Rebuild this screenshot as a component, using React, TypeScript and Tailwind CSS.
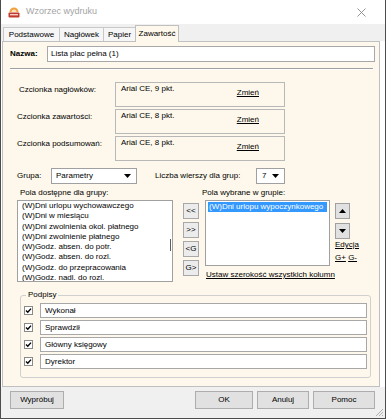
import React from "react";

function Arrow({ up }: { up?: boolean }) {
  return (
    <svg width="7" height="4" viewBox="0 0 7 4">
      <path d={up ? "M0 4 L3.5 0 L7 4 Z" : "M0 0 L7 0 L3.5 4 Z"} fill="#000" />
    </svg>
  );
}

function Check() {
  return (
    <div className="w-[9px] h-[9px] bg-white border border-[#8a8a8a] flex items-center justify-center">
      <svg width="7" height="7" viewBox="0 0 7 7">
        <path d="M1 3.5 L2.8 5.3 L6 1.6" stroke="#000" strokeWidth="1.4" fill="none" />
      </svg>
    </div>
  );
}

const available = [
  "(W)Dni urlopu wychowawczego",
  "(W)Dni w miesiącu",
  "(W)Dni zwolnienia okol. płatnego",
  "(W)Dni zwolnienie płatnego",
  "(W)Godz. absen. do potr.",
  "(W)Godz. absen. do rozl.",
  "(W)Godz. do przepracowania",
  "(W)Godz. nadl. do rozl.",
];

const fonts = [
  { label: "Czcionka nagłówków:", value: "Arial CE, 9 pkt.", pad: "pl-[16px]" },
  { label: "Czcionka zawartości:", value: "Arial CE, 8 pkt.", pad: "pl-[14px]" },
  { label: "Czcionka podsumowań:", value: "Arial CE, 8 pkt.", pad: "pl-[14px]" },
];

const signatures = ["Wykonał", "Sprawdził", "Główny księgowy", "Dyrektor"];

export default function App() {
  return (
    <div className="relative w-[386px] h-[419px] bg-white border-x border-b border-[#4d4d4d] flex flex-col overflow-hidden font-['Liberation_Sans',Arial,sans-serif] text-[8px] text-black">
      {/* title bar */}
      <div className="h-[24px] flex items-center pl-[7px]">
        <svg width="12" height="12" viewBox="0 0 12 12">
          <path d="M1.5 6 A4.5 4.5 0 0 1 10.5 6 Z" fill="#f0a040" />
          <path d="M3.5 6 A2.5 2.5 0 0 1 8.5 6 Z" fill="#fbe3b8" />
          <rect x="0.5" y="6.5" width="11" height="5" rx="1" fill="#c0392b" />
          <rect x="2" y="8" width="8" height="1.4" fill="#f5d0c8" />
        </svg>
        <span className="ml-[6px] text-[9px] text-[#a3a3a3]">Wzorzec wydruku</span>
        <svg className="ml-auto mr-[19px]" width="9" height="9" viewBox="0 0 9 9">
          <path d="M0.5 0.5 L8.5 8.5 M8.5 0.5 L0.5 8.5" stroke="#8a8a8a" strokeWidth="0.9" />
        </svg>
      </div>

      {/* tabs */}
      <div className="h-[17px] bg-[#f0f0f0] flex items-end pl-[2px]">
        <div className="w-[56px] h-[14px] bg-[#f6f6f6] border-t border-l border-[#c8c8c8] flex items-center justify-center">Podstawowe</div>
        <div className="w-[44px] h-[14px] bg-[#f6f6f6] border-t border-l border-[#c8c8c8] flex items-center justify-center">Nagłówek</div>
        <div className="w-[32px] h-[14px] bg-[#f6f6f6] border-t border-l border-[#c8c8c8] flex items-center justify-center">Papier</div>
        <div className="relative z-10 -mb-px w-[44px] h-[17px] bg-[#fdf8eb] border-t border-x border-[#c0c0c0] flex items-center justify-center">Zawartość</div>
      </div>

      {/* panel */}
      <div className="ml-[1px] w-[378px] h-[346px] bg-[#fdf8eb] border border-[#c0c0c0] flex flex-col">
        <div className="mt-[4px] h-[16px] flex items-center pl-[7px] pr-[4px]">
          <span className="w-[37px] font-bold">Nazwa:</span>
          <div className="flex-1 h-[16px] bg-white border border-[#a8a8a8] pl-[3px] flex items-center">Lista płac pełna (1)</div>
        </div>
        <div className="mt-[6px] ml-[7px] mr-[6px] border-t border-t-[#a0a0a0] border-b border-b-white" />

        <div className="mt-[12px] flex flex-col gap-[2px]">
          {fonts.map((f) => (
            <div key={f.label} className="flex items-start h-[25px]">
              <span className={`w-[112px] pt-[2px] leading-[12px] ${f.pad}`}>{f.label}</span>
              <div className="w-[170px] h-[25px] border border-[#b8b8b8] flex justify-between">
                <span className="pl-[5px] leading-[11px]">{f.value}</span>
                <span className="self-center mb-[3px] mr-[25px] underline">Zmień</span>
              </div>
            </div>
          ))}
        </div>

        <div className="mt-[7px] h-[16px] flex items-center pl-[14px]">
          <span className="w-[34px]">Grupa:</span>
          <div className="w-[86px] h-[16px] bg-white border border-[#a0a0a0] flex items-center justify-between pl-[4px] pr-[5px]">
            <span>Parametry</span>
            <Arrow />
          </div>
          <span className="ml-[18px] w-[101px] whitespace-nowrap">Liczba wierszy dla grup:</span>
          <div className="w-[29px] h-[16px] bg-white border border-[#a0a0a0] flex items-center justify-between pl-[5px] pr-[5px]">
            <span>7</span>
            <Arrow />
          </div>
        </div>

        <div className="mt-[3px] h-[12px] flex items-center pl-[17px]">
          <span className="w-[182px]">Pola dostępne dla grupy:</span>
          <span>Pola wybrane w grupie:</span>
        </div>

        <div className="mt-[1px] flex items-start pl-[14px]">
          <div className="relative w-[156px] h-[82px] bg-white border border-[#a0a0a0] pl-[4px] leading-[10.3px] overflow-hidden">
            {available.map((a) => (
              <div key={a} className="whitespace-nowrap">{a}</div>
            ))}
            <div className="absolute right-[1px] top-[38px] w-px h-[12px] bg-[#606060]" />
          </div>

          <div className="ml-[10px] mt-[3px] flex flex-col gap-[3px]">
            {["<<", ">>", "<G", "G>"].map((b) => (
              <div key={b} className="w-[16px] h-[16px] bg-[#ececec] border border-[#a8a8a8] flex items-center justify-center">{b}</div>
            ))}
          </div>

          <div className="ml-[6px] flex flex-col">
            <div className="flex items-start">
              <div className="w-[125px] h-[66px] bg-white border border-[#a0a0a0] pt-[1px] px-[2px]">
                <div className="bg-[#3399ff] text-white leading-[10px] pl-[1px] whitespace-nowrap">(W)Dni urlopu wypoczynkowego</div>
              </div>
              <div className="ml-[5px] flex flex-col">
                <div className="mt-[3px] w-[15px] h-[16px] bg-[#e1e1e1] border border-[#a0a0a0] flex items-center justify-center"><Arrow up /></div>
                <div className="mt-[4px] w-[15px] h-[16px] bg-[#e1e1e1] border border-[#a0a0a0] flex items-center justify-center"><Arrow /></div>
                <span className="mt-[1px] leading-[10px] underline">Edycja</span>
                <span className="mt-[3px] leading-[10px] whitespace-nowrap"><span className="underline">G+</span> <span className="underline">G-</span></span>
              </div>
            </div>
            <span className="mt-[4px] pl-[1px] leading-[10px] underline whitespace-nowrap">Ustaw szerokość wszystkich kolumn</span>
          </div>
        </div>

        <fieldset className="mt-[7px] ml-[17px] w-[351px] border border-[#d0d0d0] rounded-[3px] px-[3px] pb-[8px]">
          <legend className="ml-[2px] px-[2px] leading-[12px]">Podpisy</legend>
          <div className="pt-[2px] flex flex-col gap-[2px]">
            {signatures.map((s) => (
              <div key={s} className="flex items-center h-[15px]">
                <Check />
                <div className="ml-[7px] flex-1 h-[15px] bg-white border border-[#a8a8a8] pl-[4px] flex items-center">{s}</div>
              </div>
            ))}
          </div>
        </fieldset>
      </div>

      {/* bottom bar */}
      <div className="relative flex-1 bg-[#f0f0f0] flex items-start pt-[4px]">
        <div className="ml-[9px] w-[54px] h-[18px] bg-[#e1e1e1] border border-[#adadad] flex items-center justify-center">Wypróbuj</div>
        <div className="ml-auto w-[58px] h-[18px] bg-[#e1e1e1] border border-[#adadad] flex items-center justify-center">OK</div>
        <div className="ml-[4px] w-[52px] h-[18px] bg-[#e1e1e1] border border-[#adadad] flex items-center justify-center">Anuluj</div>
        <div className="ml-[4px] mr-[10px] w-[62px] h-[18px] bg-[#e1e1e1] border border-[#adadad] flex items-center justify-center">Pomoc</div>
        <svg className="absolute right-[1px] bottom-[1px]" width="10" height="10" viewBox="0 0 10 10">
          <path d="M9 2 L2 9 M9 5 L5 9 M9 8 L8 9" stroke="#a0a0a0" strokeWidth="0.8" />
        </svg>
      </div>
    </div>
  );
}
